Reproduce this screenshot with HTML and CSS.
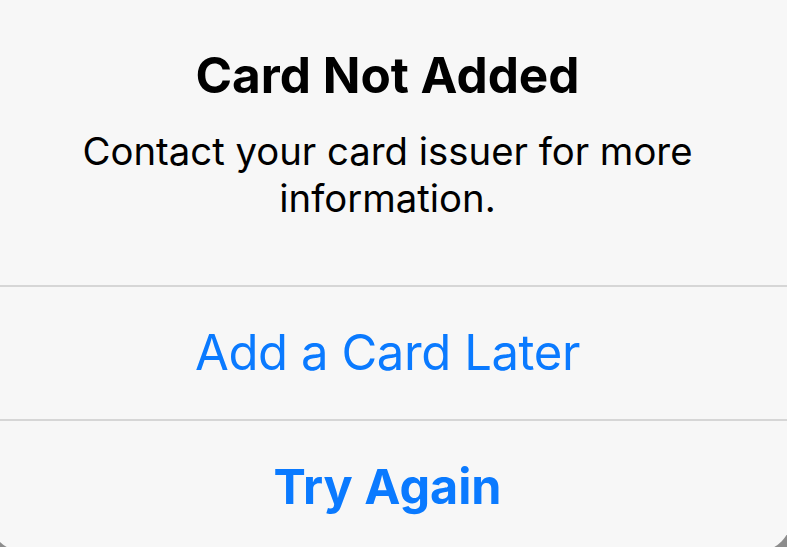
FILE: index.html
```html
<!DOCTYPE html>
<html lang="en">
<head>
<meta charset="utf-8">
<title>Card Not Added</title>
<link rel="stylesheet" href="styles.css">
</head>
<body>
<div class="alert">
  <div class="alert-header">
    <h1 class="alert-title">Card Not Added</h1>
    <p class="alert-message">Contact your card issuer for more information.</p>
  </div>
  <div class="alert-action">Add a Card Later</div>
  <div class="alert-action alert-action-preferred">Try Again</div>
</div>
</body>
</html>
```
FILE: styles.css
```css
html, body {
  margin: 0;
  padding: 0;
  height: 547px;
  overflow: hidden;
}
body {
  background: #8c8c8c;
  font-family: Inter, "Noto Sans", "Liberation Sans", sans-serif;
}
.alert {
  margin-left: -11px;
  width: 803px;
  height: 552px;
  background: #f7f7f7;
  border-radius: 0 0 36px 36px;
  display: flex;
  flex-direction: column;
}
.alert-header {
  padding: 45px 6px 63px 0;
  text-align: center;
}
.alert-title {
  margin: 0;
  font-size: 49.5px;
  line-height: 60px;
  font-weight: 700;
  color: #000;
}
.alert-message {
  margin: 23px auto 0;
  width: 640px;
  font-size: 38.3px;
  line-height: 47px;
  font-weight: 400;
  color: #000;
}
.alert-action {
  flex: 1;
  display: flex;
  align-items: center;
  justify-content: center;
  padding-right: 6px;
  border-top: 2px solid #d6d6d6;
  color: #0a7aff;
  font-size: 49px;
  letter-spacing: -0.4px;
  font-weight: 400;
}
.alert-action-preferred {
  font-size: 48.5px;
  letter-spacing: 0;
  font-weight: 700;
}
```
